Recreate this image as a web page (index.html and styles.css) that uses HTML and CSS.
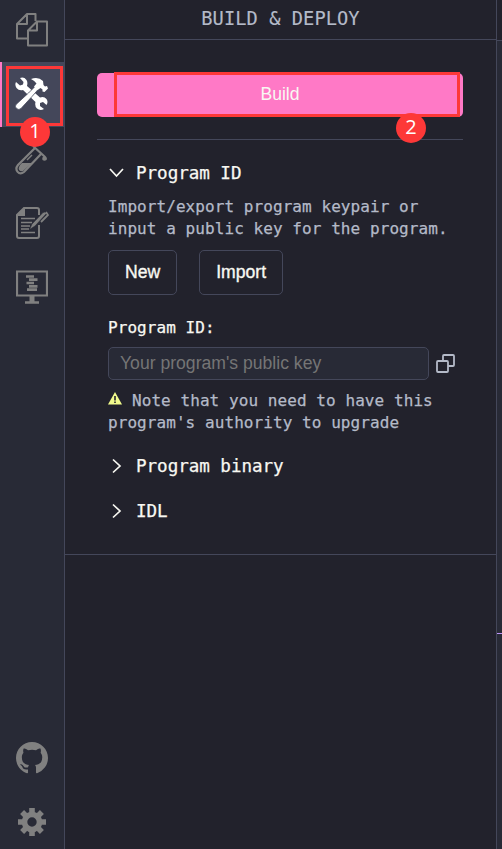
FILE: index.html
```html
<!DOCTYPE html>
<html lang="en">
<head>
<meta charset="utf-8">
<title>Build &amp; Deploy</title>
<link rel="stylesheet" href="styles.css">
</head>
<body>
<div class="app">
  <nav class="rail">
    <div class="tab">
      <svg width="32" height="34" viewBox="0 0 32 34" fill="none" stroke="#808080" stroke-width="2" stroke-linejoin="round"><path d="M12 25.500H1V11L11 1H19.500V8M2 11H11V2M21 8.500H31V32.500H12V17.500ZM13 17.500H21V9.500"/></svg>
    </div>
    <div class="tab active">
      <svg width="34" height="34" viewBox="0 0 34 34" fill="#fff"><path d="M5 1Q9-.5 11.500 3Q13 5.500 12 9L25 20.500Q29 19 31.500 22Q33.500 25 31.500 28L28 25L25 26L25 29L29 32Q25 34 22 31.500Q19.500 29 20.500 25L8 13Q4 14 1.500 11Q-.5 8 1 5L5 8.500L8 7.500L8.500 5Z"/><path d="M1 27.500L13.500 16L21 8.500L24 11.500L17 19.500L6 31.500Q4 33.500 1.500 31.500Q-.5 29.500 1 27.500Z" stroke="#44475a" stroke-width=".8"/><path d="M16 2Q23-1 28 4L28.500 8L30 9.500L32 9L33 11.500L29.500 15L27.500 14.500L27.500 12.500L25.500 11L22.500 13L19 9.500L21.500 6.500Q20 4 16 2Z"/></svg>
      <div class="mark mark-tab"></div><span class="num num-one">1</span>
    </div>
    <div class="tab">
      <svg width="34" height="34" viewBox="0 0 34 34" fill="none" stroke="#808080" stroke-width="2"><path d="M18 4L29 14M20 6L3 23C-1 28 4 34 9 30L26 12" stroke-width="2.200"/><path d="M7 21L17 21L8 29Q6 30 4 28Q3 26 5 23Z" fill="#808080" stroke="none"/><path d="M17 13L12 18" stroke-width="1.500"/><path d="M29.500 13Q33 16 31.500 18Q29.500 19.500 27.500 18Q26.500 15.500 29.500 13Z" fill="#808080" stroke="none"/></svg>
    </div>
    <div class="tab">
      <svg width="33" height="33" viewBox="0 0 33 33" fill="none" stroke="#808080" stroke-width="2"><path d="M23 8V3Q23 1 21 1H8L1 8V29Q1 31 3 31H21Q23 31 23 29V18"/><path d="M2 8L8 2V8Z" fill="#808080"/><path d="M5 11.500H19M5 15.500H16M5 19H14M5 22H13M5 25.500H19" stroke-width="1.600"/><path d="M13.500 22.500L16 17L27 5.500Q29 4 30.500 6.500L19 19Z" fill="#808080" stroke="#282a36" stroke-width=".6"/><path d="M25 15L32 8L30 5" stroke-width="1.800"/></svg>
    </div>
    <div class="tab">
      <svg width="32" height="34" viewBox="0 0 32 34" fill="none" stroke="#808080"><path d="M1 1.500H31V25.500H1Z" stroke-width="2.200"/><path d="M9 32.500H23" stroke-width="2.500"/><path d="M16 26V32" stroke-width="5"/><path d="M10 6.500H18M13 9.700H21.500M10.500 13H18M13 16.300H21.500M11 19.700H21" stroke-width="2.700"/></svg>
    </div>
    <div class="tab bottom">
      <svg width="32" height="32" viewBox="0 0 16 16" fill="#808080"><path d="M8 0C3.580 0 0 3.580 0 8c0 3.540 2.290 6.530 5.470 7.590.4.070.55-.17.55-.38 0-.19-.01-.82-.01-1.490-2.010.37-2.530-.49-2.690-.94-.09-.23-.48-.94-.82-1.130-.28-.15-.68-.52-.01-.53.63-.01 1.080.58 1.230.82.72 1.210 1.870.87 2.330.66.07-.52.28-.87.51-1.070-1.780-.2-3.640-.89-3.640-3.950 0-.87.31-1.590.82-2.150-.08-.2-.36-1.020.08-2.120 0 0 .67-.21 2.200.82.64-.18 1.320-.27 2-.27s1.360.09 2 .27c1.530-1.040 2.200-.82 2.200-.82.44 1.100.16 1.920.08 2.120.51.56.82 1.270.82 2.150 0 3.070-1.870 3.750-3.650 3.950.29.25.54.73.54 1.480 0 1.070-.01 1.930-.01 2.200 0 .21.15.46.55.38A8.010 8.010 0 0 0 16 8c0-4.420-3.580-8-8-8"/></svg>
    </div>
    <div class="tab">
      <svg width="28" height="28" viewBox="0 0 28 28" fill="none" stroke="#808080" stroke-linejoin="round"><circle cx="14" cy="14" r="7.500" stroke-width="5.600"/><path stroke-width="5.600" d="M14 0V5M14 23V28M0 14H5M23 14H28M4.100 4.100L7.500 7.500M20.500 20.500L23.900 23.900M23.900 4.100L20.500 7.500M7.500 20.500L4.100 23.900"/></svg>
    </div>
  </nav>
  <main class="panel">
    <header>BUILD &amp; DEPLOY</header>
    <div class="content">
      <div class="build-area">
        <button class="build">Build</button>
        <div class="mark mark-build"></div><span class="num num-two">2</span>
      </div>
      <section>
        <h2><svg width="16" height="16" viewBox="0 0 16 16"><path d="M2 4L8.500 11L15 4"/></svg>Program ID</h2>
        <p class="desc">Import/export program keypair or<br>input a public key for the program.</p>
        <div class="actions"><button>New</button><button>Import</button></div>
        <div class="label">Program ID:</div>
        <div class="field"><input placeholder="Your program's public key" aria-label="Program ID">
          <svg width="19" height="19" viewBox="0 0 19 19" fill="none" stroke="#b4bac8" stroke-width="1.800"><rect x="1" y="7" width="11" height="11" rx="1"/><path d="M7 7V2Q7 1 8 1H17Q18 1 18 2V11Q18 12 17 12H12"/></svg>
        </div>
        <p class="note"><svg width="14" height="13" viewBox="0 0 14 13"><path d="M7 0L14 12.500H0Z" fill="#f1fa8c"/><path d="M7 4V8.500M7 9.500V11" stroke="#22222c" stroke-width="1.600"/></svg><span>Note that you need to have this</span><br>program's authority to upgrade</p>
        <h2 class="closed"><svg width="16" height="16" viewBox="0 0 16 16"><path d="M5 1.500L12 8L5 14.500"/></svg>Program binary</h2>
        <h2 class="closed"><svg width="16" height="16" viewBox="0 0 16 16"><path d="M5 1.500L12 8L5 14.500"/></svg>IDL</h2>
      </section>
    </div>
  </main>
  <aside class="editor"><div class="editor-tabs"></div><div class="editor-body"></div><div class="terminal"></div></aside>
</div>
</body>
</html>
```
FILE: styles.css
```css
* { box-sizing: border-box; }
body { margin: 0; background: #22222c; color: #f8f8f2; font-family: "Liberation Sans", Arial, sans-serif; }
button, input { font: inherit; color: inherit; }
.app { display: flex; width: 502px; height: 849px; overflow: hidden; }
.rail { width: 65px; flex: none; display: flex; flex-direction: column; background: #282a36; border-right: 1px solid #44475a; }
.tab { height: 64px; flex: none; display: flex; align-items: center; justify-content: center; position: relative; }
.tab:first-child { height: 62px; padding-bottom: 3px; }
.tab.active { height: 65px; background: #44475a; box-shadow: inset 2px 0 #ff79c6; padding-bottom: 2px; }
.tab.bottom { margin-top: auto; }
.tab:last-child { margin-bottom: -5px; }
.mark { position: absolute; border: 3px solid #fd3838; }
.mark-tab { left: 6px; top: 4px; width: 57px; height: 60px; }
.num { position: absolute; z-index: 2; width: 30px; height: 30px; border-radius: 50%; background: #fd3838; color: #fff; font: 20px/28px "Open Sans", sans-serif; text-align: center; }
.num-one { left: 20px; top: 55px; }
.panel { width: 431px; flex: none; font-family: "DejaVu Sans Mono", monospace; }
header { height: 40px; border-bottom: 1px solid #44475a; color: #b4bac8; font-size: 18.700px; letter-spacing: .06px; line-height: 37px; text-align: center; -webkit-text-stroke: .15px; }
.content { height: 515px; padding: 33px 33px 0 32px; border-bottom: 1px solid #44475a; }
.build-area { position: relative; height: 67px; border-bottom: 1px solid #44475a; }
.build { display: block; width: 100%; height: 44px; border: 0; border-radius: 5px; background: #ff79c6; font: 17.600px/42px "Liberation Sans", sans-serif; padding: 0 0 2px; }
.mark-build { left: 17px; top: -1px; width: 346px; height: 45px; }
.num-two { left: 299px; top: 40px; }
section { padding: 20px 11px 0; }
h2 { display: flex; align-items: center; gap: 12px; height: 26px; margin: 0; font-size: 17.600px; font-weight: 400; letter-spacing: -.05px; -webkit-text-stroke: .25px; }
h2 svg { fill: none; stroke: #f8f8f2; stroke-width: 1.700; flex: none; }
p { margin: 0; color: #b4bac8; font-size: 16px; line-height: 22px; letter-spacing: .07px; white-space: nowrap; -webkit-text-stroke: .25px; }
.desc { margin-top: 10px; }
.actions { display: flex; gap: 22px; margin-top: 10px; }
.actions button { height: 45px; padding: 0 16px 1px; border: 1px solid #44475a; border-radius: 5px; background: none; font: 17.600px "Liberation Sans", sans-serif; -webkit-text-stroke: .35px; }
.label { height: 22px; margin-top: 22px; line-height: 22px; font-size: 16px; letter-spacing: .07px; -webkit-text-stroke: .25px; }
.field { display: flex; align-items: center; gap: 7px; margin-top: 8px; width: 348px; }
.field input { width: 321px; height: 33px; flex: none; padding: 0 11px; border: 1px solid #44475a; border-radius: 5px; background: #282a36; font: 17.600px "Liberation Sans", sans-serif; }
.field input::placeholder { color: #757575; }
.field svg { flex: none; }
.note { margin-top: 10px; }
.note svg { margin-right: 10px; vertical-align: 1px; }
h2.closed { margin-top: 19px; }
.editor { flex: 1; border-left: 1px solid #44475a; }
.editor-tabs { height: 41px; border-bottom: 1px solid #44475a; }
.editor-body { height: 592px; background: #282a36; }
.terminal { height: 216px; border-top: 1px solid #bd93f9; background: #282a36; }
```
